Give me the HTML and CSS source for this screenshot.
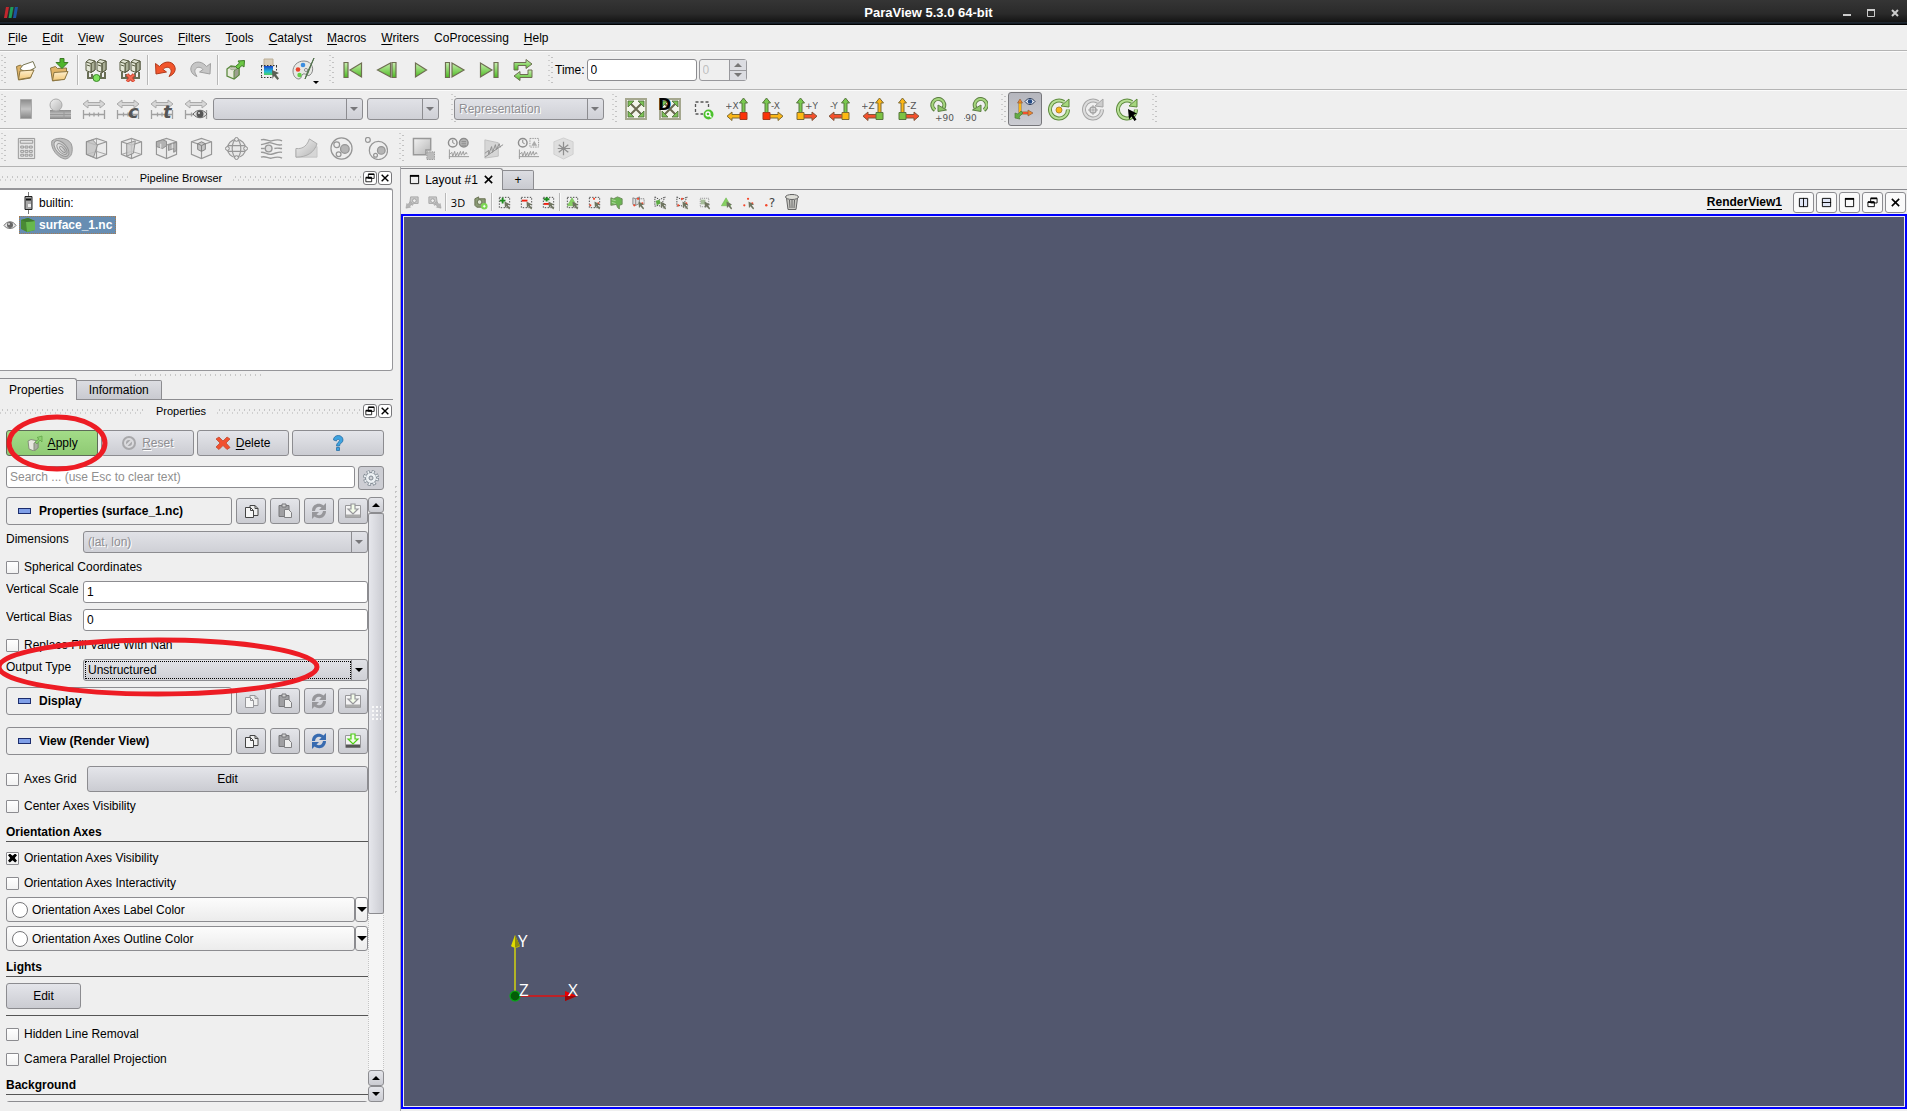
FILE: index.html
```html
<!DOCTYPE html>
<html lang="en">
<head>
<meta charset="utf-8">
<title>ParaView 5.3.0 64-bit</title>
<link rel="stylesheet" href="styles.css">
</head>
<body>
<svg class="sprite" width="0" height="0" aria-hidden="true">
<defs>
<linearGradient id="gGreen" x1="0" y1="0" x2="0" y2="1"><stop offset="0" stop-color="#c9f0b0"/><stop offset="1" stop-color="#4dbb22"/></linearGradient>
<linearGradient id="gGray" x1="0" y1="0" x2="0" y2="1"><stop offset="0" stop-color="#8b8b8b"/><stop offset=".5" stop-color="#c4c4c4"/><stop offset="1" stop-color="#868686"/></linearGradient>
<linearGradient id="gSoft" x1="0" y1="0" x2="1" y2="1"><stop offset="0" stop-color="#f2f2f2"/><stop offset="1" stop-color="#b5b5b5"/></linearGradient>
<linearGradient id="gFold" x1="0" y1="0" x2="0" y2="1"><stop offset="0" stop-color="#fff0cf"/><stop offset="1" stop-color="#f2c878"/></linearGradient>
<linearGradient id="gBlue" x1="0" y1="0" x2="0" y2="1"><stop offset="0" stop-color="#1744c8"/><stop offset=".6" stop-color="#22b8d8"/><stop offset="1" stop-color="#52d05a"/></linearGradient>

<symbol id="logo" viewBox="0 0 14 11"><path d="M2 0h3L3 11H0z" fill="#c1272d"/><path d="M6.500 0h3l-2 11h-3z" fill="#1e9e58"/><path d="M11 0h3l-2 11H9z" fill="#1b55a0"/></symbol>

<symbol id="folder" viewBox="0 0 24 24"><path d="M2.500 8.500l4-1.500 2 2 10-1v4l-2 8-12 2z" fill="#e0b468" stroke="#8a7440"/><path d="M6 11l3-4 10-3.500 2.500 6-9 5z" fill="#fff" stroke="#777755"/><path d="M4.500 21.500L6 13l14-1-3.500 7.500z" fill="url(#gFold)" stroke="#8a7440"/></symbol>
<symbol id="load" viewBox="0 0 24 24"><path d="M2.500 10l5-1.500 2 2 9-.5v4l-2 7-12 2z" fill="#e0b468" stroke="#8a7440"/><path d="M4.500 22.500L6 14.500l14-1-3.500 8z" fill="url(#gFold)" stroke="#8a7440"/><path d="M12 .5h4v4h4l-6 6-6-6h4z" fill="#4fb52b" stroke="#3c7a26"/></symbol>
<symbol id="server" viewBox="0 0 24 24"><g stroke="#55593f" stroke-width="1"><path d="M2 4l3-2.500 6 1.500v9l-4 2.500-5-2z" fill="#e3e6d6"/><path d="M7 5.500L11 3v9l-4 2.500z" fill="#a9ae96"/><path d="M2 4l5 1.500V14M3 7l3 1M13 4l3-2.500L22 3v9l-4 2.500-5-2z" fill="#e3e6d6"/><path d="M18 5.500L22 3v9l-4 2.500z" fill="#a9ae96"/><path d="M13 4l5 1.500V14M14 7l3 1" fill="none"/></g><path d="M4 14v6h17v-6M8 16v4M17 15v5" fill="none" stroke="#696e55" stroke-width="2"/></symbol>
<symbol id="connect" viewBox="0 0 24 24"><use href="#server"/><circle cx="12.500" cy="20" r="3.500" fill="#7ee05c" stroke="#3c8a2c"/></symbol>
<symbol id="disconnect" viewBox="0 0 24 24"><use href="#server"/><path d="M9 16.500l7 7M16 16.500l-7 7" stroke="#c23a28" stroke-width="3.500"/><path d="M9 16.500l7 7M16 16.500l-7 7" stroke="#f06a52" stroke-width="2"/></symbol>
<symbol id="undoShape" viewBox="0 0 24 24"><path d="M1.500 5.500l4 3C9 4 15 2.500 19 6c4 4 2.500 10-4 12.500 2.500-4 3-6.500.5-8.500-2-1.500-5-.5-6.500 1.500l3.500 2.500L2 16z" stroke-linejoin="round"/></symbol>
<symbol id="extract" viewBox="0 0 24 24"><path d="M3 11l4-3 8 1v8l-5 4-7-3z" fill="#e8ebdc" stroke="#5c8a3f" stroke-width="1.300"/><path d="M10 13l5-4v8l-5 4z" fill="#9da08e" stroke="#5c8a3f"/><ellipse cx="9" cy="10.500" rx="3" ry="1.300" fill="#c4c8b4" stroke="#85907a" stroke-width=".6"/><path d="M11.500 8.500l4-3.500-1.500-2 6.500-.5-.5 6.500-2-1.500-4 3.500z" fill="#6cc845" stroke="#3e7b28"/></symbol>
<symbol id="pickblue" viewBox="0 0 24 24"><path d="M6 1h9v8H6z" fill="#d8ccb8" stroke="#bcae96"/><path d="M6 8h9v9H6z" fill="url(#gBlue)"/><path d="M3 7.500h16M3 19.500h12M3.500 8v11M18.500 8v6" stroke="#333" stroke-dasharray="1.500 1.500" fill="none"/><path d="M14 12l7 3-3 1.500 3 4-1.500 1.500-3.500-4-1.500 3z" fill="#5b6155"/></symbol>
<symbol id="palette" viewBox="0 0 24 24"><path d="M12 3C5 3 1 8 1 13s3 8 6 8c3-.500 2-4 4-5 3-1 4 3 7 1 5-4 3-14-6-14z" fill="#e6e8e4" stroke="#888"/><circle cx="11" cy="7" r="2.300" fill="#3a8de0"/><circle cx="6" cy="11.500" r="2.300" fill="#e8442c"/><circle cx="7.500" cy="17" r="2.200" fill="#62d048"/><circle cx="14" cy="12" r="1.500" fill="#fff" stroke="#888"/><path d="M22 0l-6 15-3 6 2-6z" fill="#71906a" stroke="#51704c"/></symbol>

<symbol id="first" viewBox="0 0 24 24"><g fill="url(#gGreen)" stroke="#6e6e52" stroke-width="1.200"><path d="M3 4.500h4v15H3zM20.500 5v14L9 12z"/></g></symbol>
<symbol id="back" viewBox="0 0 24 24"><g fill="url(#gGreen)" stroke="#6e6e52" stroke-width="1.200"><path d="M17 4.500h4v15h-4zM15.500 5v14L2.500 12z"/></g></symbol>
<symbol id="play" viewBox="0 0 24 24"><path d="M6.500 5v14l11-7z" fill="url(#gGreen)" stroke="#6e6e52" stroke-width="1.200"/></symbol>
<symbol id="next" viewBox="0 0 24 24"><g fill="url(#gGreen)" stroke="#6e6e52" stroke-width="1.200"><path d="M2.500 4.500h4v15h-4zM9 5v14l12-7z"/></g></symbol>
<symbol id="last" viewBox="0 0 24 24"><g fill="url(#gGreen)" stroke="#6e6e52" stroke-width="1.200"><path d="M17 4.500h4v15h-4zM3.500 5v14L15 12z"/></g></symbol>
<symbol id="loop" viewBox="0 0 24 24"><g fill="url(#gGreen)" stroke="#6e6e52"><path d="M3 12V4.500h12V1.500L21 6l-6 4.500v-3H7V12z"/><path d="M21 12v7.500H9v3L3 18l6-4.500v3h8V12z"/></g></symbol>

<symbol id="cbar" viewBox="0 0 24 24"><path d="M6.500 2.500h11v19h-11z" fill="url(#gGray)" stroke="#aaa"/></symbol>
<symbol id="cedit" viewBox="0 0 24 24"><path d="M2 13h21v9H2z" fill="url(#gGray)"/><path d="M16 13v9M2 17.500h21" stroke="#999"/><circle cx="8" cy="8" r="6" fill="url(#gSoft)" stroke="#aaa"/></symbol>
<symbol id="range" viewBox="0 0 24 24"><path d="M1 7l5-4v2.500h12V3l5 4-5 4V8.500H6V11z" fill="#d6d6d6" stroke="#aaa"/><path d="M1.500 13v9M22.500 13v9M1.500 17.500h21M7.500 15.500v4M12 15.500v4M16.500 15.500v4" stroke="#a0a0a0" stroke-width="1.300" fill="none"/></symbol>
<symbol id="calc" viewBox="0 0 24 24"><g fill="none" stroke="#979797"><path d="M3.500 1.500h17v21h-17z" fill="#e4e4e4"/><path d="M5.500 3.500h13v3h-13z"/><path d="M6 9.500h3v2H6zM10.500 9.500h3v2h-3zM15 9.500h3v2h-3zM6 14h3v2H6zM10.500 14h3v2h-3zM15 14h3v2h-3zM6 18h3v2H6zM10.500 18h3v2h-3zM15 18h3v2h-3z"/></g></symbol>
<symbol id="contour" viewBox="0 0 24 24"><g stroke="#959595" fill="url(#gSoft)"><path d="M2 4C8-1 22 1 23 10c1 8-2 12-7 13C8 22 0 12 2 4z" fill="#bdbdbd"/><ellipse cx="12" cy="12" rx="5.500" ry="10" transform="rotate(-42 12 12)"/><ellipse cx="12.500" cy="12.500" rx="3.500" ry="7" transform="rotate(-42 12.500 12.500)"/><ellipse cx="13" cy="13" rx="1.500" ry="4" transform="rotate(-42 13 13)"/></g></symbol>
<symbol id="cube" viewBox="0 0 24 24"><g stroke="#979797" fill="none" stroke-width="1.200"><path d="M1.500 5l10.500-3.500L22.500 5v13L12 22.500 1.500 18z" fill="#ebebeb"/><path d="M1.500 5L12 8.500 22.500 5M12 8.500v14"/></g></symbol>
<symbol id="clip" viewBox="0 0 24 24"><use href="#cube"/><path d="M12 1.500V15l10 3M12 15L2 18" fill="none" stroke="#a5a5a5"/><path d="M1.500 5L8 3l5 5.500L9 21l-7.500-3z" fill="#c0c0c0" fill-opacity=".8" stroke="#909090"/></symbol>
<symbol id="slice" viewBox="0 0 24 24"><use href="#cube"/><path d="M12 1.500V15l10 3M12 15L2 18" fill="none" stroke="#a5a5a5"/><path d="M7 7l9-3-2 13-7 3z" fill="#cbcbcb" fill-opacity=".8" stroke="#909090"/></symbol>
<symbol id="thresh" viewBox="0 0 24 24"><use href="#cube"/><path d="M1.500 5L8 3l4 1.500V9l-4 3-6.500-2zM14 8.500l8.500-3V14l-3 2v-4L14 14z" fill="#b2b2b2" stroke="#8c8c8c"/><path d="M6 7v5M18 7v5" stroke="#eee"/></symbol>
<symbol id="subset" viewBox="0 0 24 24"><use href="#cube"/><path d="M8 7l4-2 4 2v6l-4 2-4-2z" fill="#c4c4c4" stroke="#808080"/><path d="M8 7l4 2 4-2M12 9v6" fill="none" stroke="#808080"/></symbol>
<symbol id="glyph" viewBox="0 0 24 24"><g fill="none" stroke="#969696" stroke-width="1.200"><circle cx="12" cy="12" r="9.500" fill="#e8e8e8"/><ellipse cx="12" cy="12" rx="4.500" ry="9.500"/><path d="M3 9h18M3 15h18"/></g><g fill="#e8e8e8" stroke="#8a8a8a"><circle cx="12" cy="2.500" r="2"/><circle cx="12" cy="21.500" r="2"/><circle cx="2.500" cy="12" r="2"/><circle cx="21.500" cy="12" r="2"/></g></symbol>
<symbol id="stream" viewBox="0 0 24 24"><g fill="none" stroke="#999" stroke-width="1.500"><path d="M1 3c5-2 7 2 11 1s7-2 11 0M1 8c4-1 5-1 8-2s9 4 14 2M15 12c3-1 5 0 8 0M1 16c4-1 6 3 11 2s7-3 11-2M1 21c5-2 7 2 11 1s7-2 11 0"/><circle cx="9" cy="12" r="3.500" fill="#ddd"/><path d="M1 12h4"/></g></symbol>
<symbol id="warp" viewBox="0 0 24 24"><path d="M1 13c10 2 17-1 22-3v11H1z" fill="#d6d6d6" stroke="#c4c4c4"/><path d="M1 12c8 1 12-4 14-10l8 5c-3 9-10 14-22 14z" fill="url(#gSoft)" stroke="#aaa"/></symbol>
<symbol id="group" viewBox="0 0 24 24"><g fill="#eee" stroke="#969696" stroke-width="1.300"><circle cx="12" cy="12" r="11"/><circle cx="7" cy="8" r="3"/><circle cx="9" cy="18" r="2.500"/><circle cx="15.500" cy="12.500" r="4.500" fill="#b5b5b5"/></g></symbol>
<symbol id="level" viewBox="0 0 24 24"><g fill="#eee" stroke="#969696" stroke-width="1.300"><circle cx="14" cy="14" r="9.500"/><circle cx="3" cy="3" r="2.500"/><circle cx="11" cy="19" r="2"/><circle cx="17" cy="14" r="4" fill="#b5b5b5"/></g></symbol>
<symbol id="selx" viewBox="0 0 24 24"><path d="M1.500 1.500h18v12h-5v5h-13z" fill="url(#gSoft)" stroke="#999" stroke-width="1.500"/><path d="M15.500 15.500h8v8h-8z" fill="#bbb" stroke="#999" stroke-dasharray="1.500 1"/></symbol>
<symbol id="wave" viewBox="0 0 24 24"><path d="M2.500 13v10M2 20.500h21M3 18l2-2 1 4 2-5 1 5 2-4 1 4 2-5 1 4 2-4 1 4 2-3 1 2" fill="none" stroke="#999"/></symbol>
<symbol id="plotsel" viewBox="0 0 24 24"><use href="#wave"/><circle cx="6" cy="6" r="4.500" fill="#eee" stroke="#8d8d8d" stroke-width="1.500"/><path d="M6 3v3l2 1" stroke="#888" fill="none"/><circle cx="17.500" cy="6" r="4.500" fill="#bbb" stroke="#8d8d8d" stroke-width="1.500"/><path d="M15 4.500h5M15 6.500h5M15 8.500h5" stroke="#888"/></symbol>
<symbol id="plotline" viewBox="0 0 24 24"><path d="M3 3l14 3v14L3 22z" fill="#d6d6d6" stroke="#c0c0c0"/><path d="M3 21L22 8M3 17l4-3 0 4 3-8 1 6 3-8 1 5 3-6 1 4" fill="none" stroke="#8f8f8f"/></symbol>
<symbol id="plottime" viewBox="0 0 24 24"><use href="#wave"/><circle cx="6" cy="6" r="4.500" fill="#eee" stroke="#8d8d8d" stroke-width="1.500"/><path d="M6 3v3l2 1" stroke="#888" fill="none"/><path d="M13.500 1.500h9v9h-9z" fill="none" stroke="#999" stroke-dasharray="1.500 1"/><path d="M18 4l3 5h-6z" fill="#aaa"/></symbol>
<symbol id="probe" viewBox="0 0 24 24"><path d="M2 5l10-4 10 4v13l-10 5-10-5z" fill="#dedede" stroke="#cfcfcf"/><path d="M12 5v14M6 12h13M7 8l10 8M17 8L7 16" stroke="#8f8f8f" stroke-width="1.300"/></symbol>

<symbol id="resetcam" viewBox="0 0 24 24"><path d="M2 2h20v20H2z" fill="#f3f4ea" stroke="#a5a78f" stroke-width="2"/><path d="M6 6l12 12M18 6L6 18" stroke="#6a6a50" stroke-width="2"/><path d="M4 4h6l-6 6zM20 4v6l-6-6zM4 20v-6l6 6zM20 20h-6l6-6z" fill="#7cc455" stroke="#4e6b38" stroke-width=".8"/></symbol>
<symbol id="resetd" viewBox="0 0 24 24"><use href="#resetcam"/><text x="0" y="13" class="icon-d">D</text></symbol>
<symbol id="zoombox" viewBox="0 0 24 24"><path d="M16.500 10V5h-13v12H11" fill="none" stroke="#555" stroke-width="1.300" stroke-dasharray="3 2"/><circle cx="16.500" cy="17.500" r="5" fill="#4cc22d"/><circle cx="16" cy="17" r="2" fill="none" stroke="#fff" stroke-width="1.300"/><path d="M17.500 18.500l2 2" stroke="#fff" stroke-width="1.300"/></symbol>
<symbol id="upG" viewBox="0 0 24 24"><path d="M16 16V6h-2.500L17.500 1l4 5H19v10z" fill="#79c94f" stroke="#57763d"/></symbol>
<symbol id="upY" viewBox="0 0 24 24"><path d="M16 16V6h-2.500L17.500 1l4 5H19v10z" fill="#fbb616" stroke="#7d6a35"/></symbol>
<symbol id="lfR" viewBox="0 0 24 24"><path d="M15 17.500H6V15l-5 4.200 5 4.300V21h9z" fill="#f4502c" stroke="#80563a"/></symbol>
<symbol id="lfY" viewBox="0 0 24 24"><path d="M15 17.500H6V15l-5 4.200 5 4.300V21h9z" fill="#fbb616" stroke="#7d6a35"/></symbol>
<symbol id="px" viewBox="0 0 24 24"><text x="-1" y="12" class="icon-ax">+X</text><use href="#upG"/><use href="#lfY"/><path d="M14 15.500h7v7h-7z" fill="#fb3208" stroke="#a33a20"/></symbol>
<symbol id="mx" viewBox="0 0 24 24"><text x="11" y="12" class="icon-ax">-X</text><g transform="matrix(-1 0 0 1 24 0)"><use href="#upG"/><use href="#lfY"/><path d="M14 15.500h7v7h-7z" fill="#fb3208" stroke="#a33a20"/></g></symbol>
<symbol id="py" viewBox="0 0 24 24"><text x="11" y="12" class="icon-ax">+Y</text><g transform="matrix(-1 0 0 1 24 0)"><use href="#upG"/><use href="#lfR"/><path d="M14 15.500h7v7h-7z" fill="#fdb913" stroke="#7d6a35"/></g></symbol>
<symbol id="my" viewBox="0 0 24 24"><text x="2" y="12" class="icon-ax">-Y</text><use href="#upG"/><use href="#lfR"/><path d="M14 15.500h7v7h-7z" fill="#fdb913" stroke="#7d6a35"/></symbol>
<symbol id="pz" viewBox="0 0 24 24"><text x="-1" y="12" class="icon-ax">+Z</text><use href="#upY"/><use href="#lfR"/><path d="M14 15.500h7v7h-7z" fill="#7cc243" stroke="#57763d"/></symbol>
<symbol id="mz" viewBox="0 0 24 24"><text x="11" y="12" class="icon-ax">-Z</text><g transform="matrix(-1 0 0 1 24 0)"><use href="#upY"/><use href="#lfR"/><path d="M14 15.500h7v7h-7z" fill="#7cc243" stroke="#57763d"/></g></symbol>
<symbol id="turn" viewBox="0 0 24 24"><path d="M5 13A6 6 0 1 1 13.500 11" fill="none" stroke="#5c7f42" stroke-width="4"/><path d="M5 13A6 6 0 1 1 13.500 11" fill="none" stroke="#a5d67d" stroke-width="2"/><path d="M8 8v6.500l8.500-1.500z" fill="#8cc565" stroke="#5c7f42"/></symbol>
<symbol id="p90" viewBox="0 0 24 24"><use href="#turn"/><text x="5" y="24" class="icon-ax">+90</text></symbol>
<symbol id="m90" viewBox="0 0 24 24"><g transform="matrix(-1 0 0 1 25 0)"><use href="#turn"/></g><text x="-2" y="24" class="icon-ax">-90</text></symbol>
<symbol id="axeseye" viewBox="0 0 24 24"><path d="M7 16V4M7 16h9" stroke="#9a7a35" stroke-width="3"/><path d="M7 16V6" stroke="#fbb616" stroke-width="2"/><path d="M7 16h9" stroke="#f4502c" stroke-width="2"/><path d="M4.500 6L7 2l2.500 4zM15 13l5 3-5 3z" fill="#f0862a" stroke="#80563a" stroke-width=".6"/><path d="M2 21v-5l3 1 3-3 2 2-4 4 1 2z" fill="#63ad44" stroke="#4e7a38" stroke-width=".7"/><path d="M12 4.500c3-4 7-4 10 0-3 4-7 4-10 0z" fill="#e8edf5" stroke="#283a58"/><circle cx="17" cy="4.500" r="2.300" fill="#234a85"/></symbol>
<symbol id="ring" viewBox="0 0 24 24"><path d="M17 5A9 9 0 1 0 21 12.500" fill="none" stroke="currentColor" stroke-width="4"/><path d="M17 5A9 9 0 1 0 21 12.500" fill="none" stroke="#b8e096" stroke-width="2"/><path d="M14 9l8-7v8z" fill="#a5d67d" stroke="currentColor"/></symbol>
<symbol id="rcenter" viewBox="0 0 24 24"><use href="#ring" color="#5d8a3d"/><circle cx="12" cy="13" r="3" fill="#fbb616" stroke="#b58a30"/></symbol>
<symbol id="rgray" viewBox="0 0 24 24"><path d="M17 5A9 9 0 1 0 21 12.500" fill="none" stroke="#a5a5a5" stroke-width="4"/><path d="M17 5A9 9 0 1 0 21 12.500" fill="none" stroke="#dcdcdc" stroke-width="2"/><path d="M14 9l8-7v8z" fill="#ccc" stroke="#a5a5a5"/><circle cx="12" cy="13" r="3" fill="none" stroke="#a5a5a5" stroke-width="1.500"/><path d="M12 8v10M7 13h10" stroke="#a5a5a5"/></symbol>
<symbol id="rpick" viewBox="0 0 24 24"><use href="#ring" color="#5d8a3d"/><path d="M13 12l9 4.500-3.500 1.500 3 4.500-2 1.500-3-4.500-2.500 3z" fill="#000"/></symbol>

<symbol id="cam" viewBox="0 0 16 16"><path d="M6 2h8v7H9l-1 2-3-2z" fill="#c9c9c9" stroke="#a8a8a8"/><circle cx="10" cy="6" r="2" fill="#eee" stroke="#a0a0a0"/><path d="M1 14l1-5 1 1 3-3 2 2-3 3 1 1z" fill="#b5b5b5" stroke="#a0a0a0" stroke-width=".6"/></symbol>
<symbol id="camgreen" viewBox="0 0 16 16"><path d="M2 4l4-2v2h7v9H4l-2-2z" fill="#8a9a75" stroke="#66704f"/><circle cx="7" cy="7.500" r="2.500" fill="#dfe6d6" stroke="#66704f"/><circle cx="12" cy="12" r="3.500" fill="#79d64e"/><path d="M10.500 12h3M12 10.500v3" stroke="#fff"/></symbol>
<symbol id="dash" viewBox="0 0 16 16"><path d="M2.500 2.500h11v11h-11z" fill="none" stroke="#444" stroke-dasharray="1.500 1.500"/></symbol>
<symbol id="arrow" viewBox="0 0 16 16"><path d="M8 7l6 3-2.500 1 2.500 3-1 1.500-3-3.500-1.500 2z" fill="#6f7560"/></symbol>
<symbol id="sadd" viewBox="0 0 16 16"><use href="#dash"/><path d="M6 3v6M3 6h6" stroke="#1e8a1e" stroke-width="2"/><use href="#arrow"/></symbol>
<symbol id="ssub" viewBox="0 0 16 16"><use href="#dash"/><path d="M3 6h6" stroke="#f02010" stroke-width="2"/><use href="#arrow"/></symbol>
<symbol id="stog" viewBox="0 0 16 16"><use href="#dash"/><path d="M6 2v5M3 4.500h6" stroke="#1e8a1e" stroke-width="2"/><path d="M3 9.500h6" stroke="#f02010" stroke-width="2"/><use href="#arrow"/></symbol>
<symbol id="tri" viewBox="0 0 16 16"><path d="M7.500 3l5 8.500h-10z" fill="#86d162" stroke="#5fae40" stroke-width=".5"/></symbol>
<symbol id="pts" viewBox="0 0 16 16"><g fill="#f4482c"><circle cx="7.500" cy="4" r="1.200"/><circle cx="3.500" cy="11" r="1.200"/><circle cx="12" cy="9" r="1.200"/></g></symbol>
<symbol id="scell" viewBox="0 0 16 16"><use href="#dash"/><use href="#tri"/><use href="#arrow"/></symbol>
<symbol id="spt" viewBox="0 0 16 16"><use href="#dash"/><use href="#pts"/><use href="#arrow"/></symbol>
<symbol id="fcell" viewBox="0 0 16 16"><path d="M2 3l3 1 4-2 5 2v6l-3 1v4l-2-2-1-3-6 1z" fill="#6bb553" stroke="#6d8a5c"/><path d="M3 5l4 1M3 8l4 1" stroke="#b8dca8"/></symbol>
<symbol id="fpt" viewBox="0 0 16 16"><path d="M2 3l3 1v7l-3-1zM5 4l4-2v7l-4 2" fill="#ddd" stroke="#888"/><path d="M9 4h5v7" fill="none" stroke="#666" stroke-dasharray="1 1"/><use href="#pts"/><use href="#arrow"/></symbol>
<symbol id="poly" viewBox="0 0 16 16"><path d="M2 2l5 3 6-3-3 6 4 3-3 3-5-3-4 1z" fill="none" stroke="#444" stroke-dasharray="1.500 1"/></symbol>
<symbol id="pcell" viewBox="0 0 16 16"><use href="#poly"/><path d="M3 6l4-1 1 4-4 2z" fill="#5cab43"/><use href="#arrow"/></symbol>
<symbol id="ppt" viewBox="0 0 16 16"><use href="#poly"/><use href="#pts"/><use href="#arrow"/></symbol>
<symbol id="block" viewBox="0 0 16 16"><path d="M3.500 3.500h9v9h-9z" fill="none" stroke="#888" stroke-dasharray="1 1"/><path d="M4 5h5v5H4z" fill="#a5bd98"/><use href="#arrow"/></symbol>
<symbol id="hcell" viewBox="0 0 16 16"><use href="#tri"/><use href="#arrow"/></symbol>
<symbol id="hpt" viewBox="0 0 16 16"><use href="#pts"/><use href="#arrow"/></symbol>
<symbol id="query" viewBox="0 0 16 16"><circle cx="3.500" cy="11" r="1.300" fill="#f4482c"/><text x="6" y="13" class="icon-q">?</text></symbol>
<symbol id="trash" viewBox="0 0 16 18"><path d="M2.500 5h11L12 16.500H4z" fill="#c9c9c4" stroke="#666"/><path d="M5.500 7l.5 8M8 7v8M10.500 7l-.5 8" stroke="#666"/><ellipse cx="8" cy="4" rx="6.500" ry="2.500" fill="#deded8" stroke="#666"/><path d="M6 1.500h4" stroke="#666"/></symbol>

<symbol id="float" viewBox="0 0 12 12"><path d="M4 1.500h7v5H4zM1 5.500h7v5H1z" fill="#fff" stroke="#000"/><path d="M4 1.500h7M1 5.500h7" stroke="#000" stroke-width="2"/></symbol>
<symbol id="close" viewBox="0 0 12 12"><path d="M2 2l8 8M10 2l-8 8" stroke="#000" stroke-width="1.700"/></symbol>
<symbol id="max" viewBox="0 0 12 12"><path d="M1.500 2h9v8.500h-9z" fill="none" stroke="#000"/><path d="M1 2h10" stroke="#000" stroke-width="2"/></symbol>
<symbol id="splith" viewBox="0 0 12 12"><path d="M1.500 1.500h9v9h-9z" fill="#dfe5f5" stroke="#000"/><path d="M6 1v10" stroke="#000"/></symbol>
<symbol id="splitv" viewBox="0 0 12 12"><path d="M1.500 1.500h9v9h-9z" fill="#dfe5f5" stroke="#000"/><path d="M1 6h10" stroke="#000"/></symbol>

<symbol id="copy" viewBox="0 0 16 16"><path d="M7 2.500h5l3 3v7H7z" fill="#eee" stroke="currentColor"/><path d="M2.500 4.500h5l3 3v7h-8z" fill="#f6f6f6" stroke="currentColor"/><path d="M7.500 4.500v3h3M12 2.500v3h3" fill="none" stroke="currentColor"/></symbol>
<symbol id="paste" viewBox="0 0 16 16"><path d="M2 2.500h10v11H2z" fill="#a0a0a3" stroke="#77777a"/><path d="M5 1h4v3H5z" fill="#d5d5d5" stroke="#77777a"/><path d="M7.500 6.500h4l3 3v5h-7z" fill="#eee" stroke="#808083"/></symbol>
<symbol id="reload" viewBox="0 0 16 16"><path d="M1 8C1 1 8-1 12.500 2.500L15 0v7H8l2.500-2.500C8 3 4.500 4 4 8z" fill="currentColor"/><path d="M15 8c0 7-7 9-11.500 5.500L1 16V9h7l-2.500 2.500c2.500 1.500 6 .5 6.500-3.500z" fill="currentColor"/></symbol>
<symbol id="save" viewBox="0 0 16 16"><path d="M.5 2.500h15v12H.5z" fill="#f4f4f4" stroke="#98989b"/><path d="M1 11.500h14v3H1z" fill="var(--base)"/><path d="M6 1h4v5h3l-5 5-5-5h3z" fill="#f2fbe8" stroke="currentColor" stroke-width="1.200"/></symbol>
<symbol id="gear" viewBox="0 0 16 16"><circle cx="8" cy="8" r="6.500" fill="none" stroke="#7f8992" stroke-width="3" stroke-dasharray="3 2.105"/><circle cx="8" cy="8" r="5.500" fill="#edf1f4" stroke="#7f8992"/><circle cx="8" cy="8" r="6.200" fill="none" stroke="#edf1f4" stroke-width="2.200" stroke-dasharray="1.600 3.270" stroke-dashoffset="-.6"/><circle cx="8" cy="8" r="2" fill="#d0d2d6" stroke="#7f8992"/></symbol>
<symbol id="apply" viewBox="0 0 16 16"><path d="M1 6l3-1.500L11 6v7l-4 3-5-2z" fill="#e8e8e0" stroke="#85907a"/><path d="M7 8l4-2v7l-4 3z" fill="#a9ada0" stroke="#85907a"/><path d="M8 7l4-3-2-1.500L15 1v6l-2-2-3 4z" fill="#8ed070" stroke="#5fa045" stroke-width=".7"/></symbol>
<symbol id="ban" viewBox="0 0 16 16"><circle cx="8" cy="8" r="7" fill="#a8a8ab"/><circle cx="8" cy="8" r="4" fill="none" stroke="#dadadd" stroke-width="2"/><path d="M5 11l6-6" stroke="#dadadd" stroke-width="2"/></symbol>
<symbol id="cross" viewBox="0 0 16 16"><path d="M4 2l4 4 4-4 3 2-4 4 4 4.500-3 2-4-4-4 4-3-2.500 4-4-4-4z" fill="#f1502f" stroke="#c04a30" stroke-width=".8"/></symbol>
<symbol id="help" viewBox="0 0 16 16"><path d="M3.500 5c0-6 9.500-6 9.500 0 0 3-3.500 3-3.500 6h-3c0-3.500 3-4 3-5.500s-3-1.500-3 .5z" fill="#3ea3e0" stroke="#2a6fa5" stroke-width=".8"/><path d="M6.500 12.500h3v3h-3z" fill="#3ea3e0" stroke="#2a6fa5" stroke-width=".8"/></symbol>
<symbol id="eye" viewBox="0 0 14 10"><path d="M1 5.500C4 .5 10 .5 13 5.500 10 9.500 4 9.500 1 5.500z" fill="#e6e6e6" stroke="#777"/><circle cx="7" cy="5" r="3" fill="#666"/><circle cx="6" cy="4" r="1" fill="#ddd"/></symbol>
</defs>
</svg>

<header class="titlebar">
  <svg class="app-logo" aria-hidden="true"><use href="#logo"/></svg>
  <h1>ParaView 5.3.0 64-bit</h1>
  <div class="window-buttons">
    <button aria-label="Minimize"><svg viewBox="0 0 8 8"><path d="M0 5h8v2H0z" fill="#ccc"/></svg></button>
    <button aria-label="Maximize"><svg viewBox="0 0 8 8"><path d="M.5 1h7v6.500h-7z" fill="none" stroke="#ccc"/><path d="M0 1h8" stroke="#ccc" stroke-width="2"/></svg></button>
    <button aria-label="Close window"><svg viewBox="0 0 8 8"><path d="M1 1l6 6M7 1L1 7" stroke="#ccc" stroke-width="2"/></svg></button>
  </div>
</header>

<nav class="menubar">
  <a href="#"><u>F</u>ile</a><a href="#"><u>E</u>dit</a><a href="#"><u>V</u>iew</a><a href="#"><u>S</u>ources</a><a href="#"><u>F</u>ilters</a><a href="#"><u>T</u>ools</a><a href="#"><u>C</u>atalyst</a><a href="#"><u>M</u>acros</a><a href="#"><u>W</u>riters</a><a href="#">CoProcessing</a><a href="#"><u>H</u>elp</a>
</nav>

<div class="toolbar">
  <i class="grip"></i>
  <button class="tool" aria-label="Open"><svg><use href="#folder"/></svg></button>
  <button class="tool" aria-label="Load state"><svg><use href="#load"/></svg></button>
  <i class="sep"></i>
  <button class="tool" aria-label="Connect"><svg><use href="#connect"/></svg></button>
  <button class="tool" aria-label="Disconnect"><svg><use href="#disconnect"/></svg></button>
  <i class="sep"></i>
  <button class="tool undo" aria-label="Undo"><svg><use href="#undoShape"/></svg></button>
  <button class="tool redo" aria-label="Redo"><svg><use href="#undoShape"/></svg></button>
  <i class="sep"></i>
  <button class="tool" aria-label="Extract"><svg><use href="#extract"/></svg></button>
  <button class="tool" aria-label="Pick"><svg><use href="#pickblue"/></svg></button>
  <button class="tool has-menu" aria-label="Palette"><svg><use href="#palette"/></svg></button>
  <i class="grip next"></i>
  <button class="tool" aria-label="First frame"><svg><use href="#first"/></svg></button>
  <button class="tool" aria-label="Previous frame"><svg><use href="#back"/></svg></button>
  <button class="tool" aria-label="Play"><svg><use href="#play"/></svg></button>
  <button class="tool" aria-label="Next frame"><svg><use href="#next"/></svg></button>
  <button class="tool" aria-label="Last frame"><svg><use href="#last"/></svg></button>
  <button class="tool" aria-label="Loop"><svg><use href="#loop"/></svg></button>
  <i class="grip next"></i>
  <label for="time">Time:</label>
  <input id="time" class="text time" type="text" value="0">
  <div class="spin"><input type="text" value="0" aria-label="Time index" disabled><span><button aria-label="Up" disabled><i class="up"></i></button><button aria-label="Down" disabled><i class="down"></i></button></span></div>
</div>

<div class="toolbar">
  <i class="grip"></i>
  <button class="tool" aria-label="Color legend"><svg><use href="#cbar"/></svg></button>
  <button class="tool" aria-label="Edit color map"><svg><use href="#cedit"/></svg></button>
  <button class="tool" aria-label="Rescale"><svg><use href="#range"/></svg></button>
  <button class="tool" aria-label="Rescale custom"><svg viewBox="0 0 24 24"><use href="#range"/><text x="12" y="21" class="icon-i">c</text></svg></button>
  <button class="tool" aria-label="Rescale over time"><svg viewBox="0 0 24 24"><use href="#range"/><text x="13" y="21" class="icon-i">t</text></svg></button>
  <button class="tool" aria-label="Rescale visible"><svg viewBox="0 0 24 24"><use href="#range"/><path d="M9 17c4-5 10-5 14 0-4 5-10 5-14 0z" fill="#ddd" stroke="#666"/><circle cx="16" cy="17" r="3.500" fill="#555"/><circle cx="15" cy="16" r="1" fill="#ddd"/></svg></button>
  <div class="combo w150"><select aria-label="Color by" disabled><option></option></select></div>
  <div class="combo w72"><select aria-label="Component" disabled><option></option></select></div>
  <i class="grip next"></i>
  <div class="combo w150 flush"><select aria-label="Representation" disabled><option>Representation</option></select></div>
  <i class="grip next"></i>
  <button class="tool" aria-label="Reset camera"><svg><use href="#resetcam"/></svg></button>
  <button class="tool" aria-label="Zoom to data"><svg><use href="#resetd"/></svg></button>
  <button class="tool" aria-label="Zoom to box"><svg><use href="#zoombox"/></svg></button>
  <button class="tool" aria-label="View +X"><svg><use href="#px"/></svg></button>
  <button class="tool" aria-label="View -X"><svg><use href="#mx"/></svg></button>
  <button class="tool" aria-label="View +Y"><svg><use href="#py"/></svg></button>
  <button class="tool" aria-label="View -Y"><svg><use href="#my"/></svg></button>
  <button class="tool" aria-label="View +Z"><svg><use href="#pz"/></svg></button>
  <button class="tool" aria-label="View -Z"><svg><use href="#mz"/></svg></button>
  <button class="tool" aria-label="Rotate +90"><svg><use href="#p90"/></svg></button>
  <button class="tool" aria-label="Rotate -90"><svg><use href="#m90"/></svg></button>
  <i class="grip next"></i>
  <button class="tool pressed" aria-label="Show orientation axes" aria-pressed="true"><svg><use href="#axeseye"/></svg></button>
  <button class="tool" aria-label="Show center"><svg><use href="#rcenter"/></svg></button>
  <button class="tool" aria-label="Reset center"><svg><use href="#rgray"/></svg></button>
  <button class="tool" aria-label="Pick center"><svg><use href="#rpick"/></svg></button>
  <i class="grip next"></i>
</div>

<div class="toolbar filters">
  <i class="grip"></i>
  <button class="tool" aria-label="Calculator"><svg><use href="#calc"/></svg></button>
  <button class="tool" aria-label="Contour"><svg><use href="#contour"/></svg></button>
  <button class="tool" aria-label="Clip"><svg><use href="#clip"/></svg></button>
  <button class="tool" aria-label="Slice"><svg><use href="#slice"/></svg></button>
  <button class="tool" aria-label="Threshold"><svg><use href="#thresh"/></svg></button>
  <button class="tool" aria-label="Extract subset"><svg><use href="#subset"/></svg></button>
  <button class="tool" aria-label="Glyph"><svg><use href="#glyph"/></svg></button>
  <button class="tool" aria-label="Stream tracer"><svg><use href="#stream"/></svg></button>
  <button class="tool" aria-label="Warp"><svg><use href="#warp"/></svg></button>
  <button class="tool" aria-label="Group datasets"><svg><use href="#group"/></svg></button>
  <button class="tool" aria-label="Extract level"><svg><use href="#level"/></svg></button>
  <i class="grip next"></i>
  <button class="tool" aria-label="Extract selection"><svg><use href="#selx"/></svg></button>
  <button class="tool" aria-label="Plot global variables over time"><svg><use href="#plotsel"/></svg></button>
  <button class="tool" aria-label="Plot over line"><svg><use href="#plotline"/></svg></button>
  <button class="tool" aria-label="Plot selection over time"><svg><use href="#plottime"/></svg></button>
  <button class="tool" aria-label="Probe"><svg><use href="#probe"/></svg></button>
</div>

<main class="workspace">
  <aside class="dock">
    <div class="dock-title"><i></i><h2>Pipeline Browser</h2><i></i><button aria-label="Float"><svg><use href="#float"/></svg></button><button aria-label="Close"><svg><use href="#close"/></svg></button></div>
    <ul class="tree">
      <li><span class="eye"></span><span class="node"><svg class="node-icon" viewBox="0 0 16 22"><path d="M8.500 0v22" stroke="#777"/><path d="M5 4.500h7v13H5z" fill="#a8a8a8" stroke="#222"/><path d="M6 6.500h5v2H6z" fill="#111"/><path d="M8 12h3v3H8z" fill="#eee"/></svg>builtin:</span></li>
      <li><svg class="eye" aria-label="Visible"><use href="#eye"/></svg><span class="node selected"><svg class="node-icon" viewBox="0 0 16 16"><path d="M1 3l7-2 7 3v9l-8 2-6-3z" fill="#4a8a35"/><path d="M6 5l9-1v9l-8 2z" fill="#67b84c"/><path d="M1 3l7-2 7 3-9 1z" fill="#3f7a30"/></svg>surface_1.nc</span></li>
    </ul>
    <div class="splitter"></div>
    <div class="tabs"><button class="tab active">Properties</button><button class="tab">Information</button></div>
    <div class="dock-title"><i></i><h2>Properties</h2><i></i><button aria-label="Float"><svg><use href="#float"/></svg></button><button aria-label="Close"><svg><use href="#close"/></svg></button></div>
    <div class="actions">
      <button class="btn apply"><svg><use href="#apply"/></svg><span><u>A</u>pply</span></button>
      <button class="btn" disabled><svg><use href="#ban"/></svg><span><u>R</u>eset</span></button>
      <button class="btn"><svg><use href="#cross"/></svg><span><u>D</u>elete</span></button>
      <button class="btn" aria-label="Help"><svg><use href="#help"/></svg></button>
    </div>
    <div class="search"><input class="text" type="text" aria-label="Search" placeholder="Search ... (use Esc to clear text)"><button class="btn square" aria-label="Advanced"><svg><use href="#gear"/></svg></button></div>
    <div class="scroll">
      <form class="form">
        <div class="section"><button type="button" class="fold"><i></i>Properties (surface_1.nc)</button><button type="button" class="btn mini" aria-label="Copy"><svg><use href="#copy"/></svg></button><button type="button" class="btn mini" aria-label="Paste"><svg><use href="#paste"/></svg></button><button type="button" class="btn mini off" aria-label="Restore defaults"><svg><use href="#reload"/></svg></button><button type="button" class="btn mini off" aria-label="Save defaults"><svg><use href="#save"/></svg></button></div>
        <div class="field"><label for="dims">Dimensions</label><div class="combo"><select id="dims" disabled><option>(lat, lon)</option></select></div></div>
        <label class="check"><input type="checkbox">Spherical Coordinates</label>
        <div class="field"><label for="vs">Vertical Scale</label><input id="vs" class="text" type="text" value="1"></div>
        <div class="field"><label for="vb">Vertical Bias</label><input id="vb" class="text" type="text" value="0"></div>
        <label class="check"><input type="checkbox">Replace Fill Value With Nan</label>
        <div class="field"><label for="ot">Output Type</label><div class="combo focus"><select id="ot"><option>Unstructured</option></select></div></div>
        <div class="section"><button type="button" class="fold"><i></i>Display</button><button type="button" class="btn mini off" aria-label="Copy"><svg><use href="#copy"/></svg></button><button type="button" class="btn mini" aria-label="Paste"><svg><use href="#paste"/></svg></button><button type="button" class="btn mini off" aria-label="Restore defaults"><svg><use href="#reload"/></svg></button><button type="button" class="btn mini off" aria-label="Save defaults"><svg><use href="#save"/></svg></button></div>
        <div class="section"><button type="button" class="fold"><i></i>View (Render View)</button><button type="button" class="btn mini" aria-label="Copy"><svg><use href="#copy"/></svg></button><button type="button" class="btn mini" aria-label="Paste"><svg><use href="#paste"/></svg></button><button type="button" class="btn mini blue" aria-label="Restore defaults"><svg><use href="#reload"/></svg></button><button type="button" class="btn mini green" aria-label="Save defaults"><svg><use href="#save"/></svg></button></div>
        <div class="field grid-row"><label class="check"><input type="checkbox">Axes Grid</label><button type="button" class="btn">Edit</button></div>
        <label class="check"><input type="checkbox">Center Axes Visibility</label>
        <h3>Orientation Axes</h3>
        <label class="check"><input type="checkbox" checked>Orientation Axes Visibility</label>
        <label class="check"><input type="checkbox">Orientation Axes Interactivity</label>
        <div class="color"><button type="button"><i></i>Orientation Axes Label Color</button><button type="button" aria-label="Label color menu"><b></b></button></div>
        <div class="color"><button type="button"><i></i>Orientation Axes Outline Color</button><button type="button" aria-label="Outline color menu"><b></b></button></div>
        <h3>Lights</h3>
        <button type="button" class="btn lights">Edit</button>
        <hr>
        <label class="check"><input type="checkbox">Hidden Line Removal</label>
        <label class="check"><input type="checkbox">Camera Parallel Projection</label>
        <h3>Background</h3>
        <div class="combo"><select aria-label="Background mode"><option></option></select></div>
      </form>
      <div class="scrollbar"><button class="btn" aria-label="Scroll up"><i class="up"></i></button><div class="track"><div class="thumb"></div></div><button class="btn" aria-label="Scroll up"><i class="up"></i></button><button class="btn" aria-label="Scroll down"><i class="down"></i></button></div>
    </div>
  </aside>
  <div class="vsplit"></div>
  <section class="views">
    <div class="tabs view-tabs"><button class="tab active"><svg><use href="#max"/></svg>Layout #1<svg><use href="#close"/></svg></button><button class="tab add">+</button></div>
    <div class="viewbar">
      <button aria-label="Undo camera"><svg><use href="#cam"/></svg></button>
      <button aria-label="Redo camera" class="flip"><svg><use href="#cam"/></svg></button>
      <i class="sep"></i>
      <button class="label3d">3D</button>
      <button aria-label="Adjust camera"><svg><use href="#camgreen"/></svg></button>
      <i class="sep"></i>
      <button aria-label="Add selection"><svg><use href="#sadd"/></svg></button>
      <button aria-label="Subtract selection"><svg><use href="#ssub"/></svg></button>
      <button aria-label="Toggle selection"><svg><use href="#stog"/></svg></button>
      <i class="sep"></i>
      <button aria-label="Select cells on"><svg><use href="#scell"/></svg></button>
      <button aria-label="Select points on"><svg><use href="#spt"/></svg></button>
      <button aria-label="Select cells through"><svg><use href="#fcell"/></svg></button>
      <button aria-label="Select points through"><svg><use href="#fpt"/></svg></button>
      <button aria-label="Select cells with polygon"><svg><use href="#pcell"/></svg></button>
      <button aria-label="Select points with polygon"><svg><use href="#ppt"/></svg></button>
      <button aria-label="Select block"><svg><use href="#block"/></svg></button>
      <button aria-label="Interactive cells"><svg><use href="#hcell"/></svg></button>
      <button aria-label="Interactive points"><svg><use href="#hpt"/></svg></button>
      <button aria-label="Hover points"><svg><use href="#query"/></svg></button>
      <button aria-label="Clear selection" class="clear"><svg><use href="#trash"/></svg></button>
      <a class="view-name" href="#">RenderView1</a>
      <div class="frame-buttons"><button aria-label="Split horizontal"><svg><use href="#splith"/></svg></button><button aria-label="Split vertical"><svg><use href="#splitv"/></svg></button><button aria-label="Maximize view"><svg><use href="#max"/></svg></button><button aria-label="Float view"><svg><use href="#float"/></svg></button><button aria-label="Close view"><svg><use href="#close"/></svg></button></div>
    </div>
    <div class="render">
      <svg class="triad" viewBox="0 0 90 85" role="img" aria-label="Orientation axes">
        <path d="M15 70V16" stroke="#e6e600" stroke-width="1.300"/><path d="M15 9l5 11c-2 2-7 2-9 0z" fill="#e0dc00"/><path d="M15 9l5 11-5 1.500z" fill="#8f8c10"/>
        <path d="M15 70h54" stroke="#e01010" stroke-width="1.300"/><path d="M77 70l-12-5v10z" fill="#e80000"/><path d="M77 70l-12 5v-5z" fill="#9a0808"/>
        <circle cx="15" cy="70" r="5" fill="#045c08" stroke="#08a818" stroke-width="1.200"/>
        <text x="18" y="21">Y</text><text x="19" y="70">Z</text><text x="68" y="70">X</text>
      </svg>
    </div>
  </section>
</main>

<svg class="marks" width="330" height="290" aria-hidden="true"><g fill="none" stroke="#ed1c24" stroke-width="5"><ellipse cx="57" cy="33" rx="48" ry="26"/><ellipse cx="158" cy="257" rx="159" ry="27"/></g></svg>
</body>
</html>
```
FILE: styles.css
```css
* { box-sizing: border-box; }
body {
  margin: 0;
  height: 100vh;
  display: flex;
  flex-direction: column;
  overflow: hidden;
  background: #efefef;
  color: #000;
  font: 12px/16px "Liberation Sans", Arial, sans-serif;
}
button, input, select { font: inherit; color: inherit; margin: 0; padding: 0; border: 0; background: none; }
button { display: flex; align-items: center; justify-content: center; }
h1, h2, h3, ul { margin: 0; padding: 0; list-style: none; }
svg { display: block; overflow: visible; flex: none; }
.sprite { position: absolute; }

/* title bar and menu */
.titlebar {
  flex: none;
  display: flex;
  align-items: center;
  height: 25px;
  padding: 0 8px 0 4px;
  background: linear-gradient(#353535, #2a2a2a 55%, #141414 88%, #2b3b4d 92%, #000 96%);
}
.app-logo { width: 14px; height: 11px; }
.titlebar h1 { flex: 1; padding-right: 4px; text-align: center; font-size: 13px; line-height: 24px; color: #fff; }
.window-buttons { display: flex; gap: 16px; }
.window-buttons svg { width: 8px; height: 8px; }
.menubar { flex: none; display: flex; gap: 15px; height: 26px; padding: 5px 8px; border-bottom: 1px solid #b4b4b4; }
.menubar a { color: #000; text-decoration: none; }
u { text-underline-offset: 2px; }

/* toolbars */
.toolbar { flex: none; display: flex; align-items: center; height: 39px; padding-bottom: 2px; border-top: 1px solid #fbfbfb; border-bottom: 1px solid #b4b4b4; }
.toolbar.filters { height: 38px; padding-bottom: 0; }
.tool { width: 34px; height: 34px; flex: none; }
.tool svg { width: 24px; height: 24px; }
.filters .tool { width: 35px; }
.filters .tool svg { width: 23px; height: 23px; }
.filters .grip.next { margin-left: 4px; }
.grip {
  flex: none;
  width: 9px;
  height: 30px;
  background:
    radial-gradient(circle, #c2c2c2 1px, transparent 1px) 2px 0 / 6px 5px repeat-y,
    radial-gradient(circle, #cdcdcd 1px, transparent 1px) -1px 3px / 6px 5px repeat-y;
}
.grip.next { width: 8px; margin-left: 7px; }
.sep { flex: none; width: 2px; height: 30px; background: #b8b8b8; border-right: 1px solid #fafafa; }
.undo { fill: #f2552c; stroke: #b03a1c; }
.redo { fill: #c6c6c6; stroke: #a0a0a0; }
.redo svg { transform: scaleX(-1); }
.has-menu { position: relative; }
.has-menu::after { content: ""; position: absolute; right: 2px; bottom: 3px; border: 3px solid transparent; border-top-color: #000; border-bottom: 0; }
.pressed { border: 1px solid #77777b; border-radius: 3px; background: linear-gradient(#b5b6bd, #cbccd2); }
.icon-d { font: bold 16px "DejaVu Sans", sans-serif; }
.icon-ax { font: 9px "DejaVu Sans", sans-serif; fill: #555; }
.icon-i { font: italic bold 18px "DejaVu Sans", sans-serif; fill: #555; }
.icon-q { font: 13px "DejaVu Sans", sans-serif; fill: #444; }

/* inputs */
.text { height: 22px; padding: 0 3px; border: 1px solid #8c8c90; border-radius: 3px; background: #fff; outline: 0; }
.text::placeholder { color: #8f8f8f; opacity: 1; }
.time { width: 110px; margin: 0 2px; }
.spin { display: flex; width: 48px; height: 22px; border: 1px solid #98989c; border-radius: 3px; }
.spin input { flex: 1; min-width: 0; padding-left: 3px; color: #c0c0c0; }
.spin span { width: 17px; border-left: 1px solid #98989c; background: #dcdde2; }
.spin button { width: 100%; height: 10px; }
.spin button + button { border-top: 1px solid #98989c; }
.up, .down { border: 4px solid transparent; border-top: 0; border-bottom-color: #000; }
.down { border-top: 4px solid #000; border-bottom: 0; }
.spin .up { border-bottom-color: #777; }
.spin .down { border-top-color: #777; }
.combo {
  position: relative;
  height: 22px;
  border: 1px solid #8c8c90;
  border-radius: 3px;
  background: linear-gradient(#e1e2e7, #cfd0d6);
}
.combo select { appearance: none; display: block; width: 100%; height: 20px; padding: 0 20px 0 4px; outline: 0; opacity: 1; }
.combo select:disabled { color: #8e8e92; text-shadow: 1px 1px #fff; }
.combo::before { content: ""; position: absolute; top: 0; bottom: 0; right: 15px; border-left: 1px solid #8c8c90; }
.combo::after { content: ""; position: absolute; top: 8px; right: 4px; border: 4px solid transparent; border-top-color: #000; border-bottom: 0; }
.combo:has(:disabled)::after { border-top-color: #77777a; }
.combo.focus select { width: calc(100% - 17px); height: 18px; margin: 1px; padding-left: 3px; outline: 1px dotted #000; outline-offset: -1px; }
.toolbar .combo { margin-right: 4px; }
.toolbar .combo.flush { margin: 0 0 0 -4px; }
.w150 { width: 150px; }
.w72 { width: 72px; }

.btn {
  height: 26px;
  gap: 5px;
  border: 1px solid #8c8c90;
  border-radius: 3px;
  background: linear-gradient(#e4e5ea, #cbccd2);
}
.btn:disabled { color: #8e8e92; text-shadow: 1px 1px #fff; }
.btn svg { width: 16px; height: 16px; }

/* left dock */
.workspace { flex: 1; min-height: 0; display: flex; }
.dock { flex: none; width: 393px; display: flex; flex-direction: column; padding-bottom: 9px; }
.dock-title { flex: none; display: flex; align-items: center; height: 21px; padding-right: 1px; gap: 1px; }
.dock-title i {
  flex: 1;
  height: 6px;
  background:
    radial-gradient(circle, #c6c6c6 1px, transparent 1px) 0 -1px / 5px 6px repeat-x,
    radial-gradient(circle, #d0d0d0 1px, transparent 1px) 3px 2px / 5px 6px repeat-x;
}
.dock-title h2 { padding: 0 10px; font-weight: normal; font-size: 11px; }
.dock-title button { width: 14px; height: 14px; border: 1px solid #77777a; border-radius: 3px; background: #fff; }
.dock-title svg { width: 10px; height: 10px; }
.tree {
  flex: none;
  height: 183px;
  padding-top: 2px;
  border: 1px solid #96969a;
  border-width: 2px 1px 1px 0;
  border-radius: 0 3px 3px 0;
  background: #fff;
}
.tree li { display: flex; align-items: center; height: 22px; padding-left: 3px; gap: 2px; }
.eye { width: 14px; height: 10px; }
.node { display: flex; align-items: center; gap: 3px; height: 18px; padding: 0 4px 0 1px; }
.node-icon { width: 16px; height: 22px; }
.selected { font-weight: bold; color: #fff; background: #678db2; outline: 1px dotted #a67c52; outline-offset: -1px; }
.selected .node-icon { height: 16px; }
.splitter { flex: none; width: 128px; height: 7px; margin: 0 auto; background: radial-gradient(circle, #c8c8c8 1px, transparent 1px) 0 2px / 5px 4px repeat-x; }
.tabs { flex: none; display: flex; align-items: flex-end; height: 22px; box-shadow: inset 0 -1px #8c8c90; }
.tab { height: 20px; padding: 0 12px; border: 1px solid #8c8c90; border-radius: 0 2px 0 0; background: linear-gradient(#dcdde2, #c9cad0); }
.tab.active { height: 22px; padding: 0 12px 0 9px; border-bottom: 0; border-left: 0; background: #efefef; border-radius: 0 3px 0 0; }
.tab + .tab { border-left: 0; }
.actions { flex: none; display: grid; grid-template-columns: repeat(4, 1fr); gap: 3px; padding: 9px 9px 10px 6px; }
.actions .apply { background: linear-gradient(#a3dc88, #8fca74); border-color: #5d6b58; }
.search { flex: none; display: flex; gap: 3px; padding: 0 9px 7px 6px; }
.search .text { flex: 1; height: 22px; }
.square { width: 26px; height: 24px; background: #cdced4; }
.scroll { flex: 1; min-height: 0; display: flex; padding: 0 9px 0 6px; overflow: hidden; }
.form { flex: 1; display: flex; flex-direction: column; gap: 6px; overflow: hidden; }
.form > * { flex: none; }
.section { display: flex; align-items: center; gap: 4px; }
.section + .section { margin-top: 6px; }
.fold { flex: 1; height: 28px; justify-content: flex-start; gap: 8px; padding-left: 11px; border: 1px solid #8c8c90; border-radius: 3px; font-weight: bold; }
.fold i { width: 13px; height: 6px; border: 1px solid #1c2d6e; background: #7f9fe8; }
.mini { width: 30px; color: #444; --base: #aaa; }
.off { color: #97979b; }
.blue { color: #386bb0; }
.green { color: #4ccf14; --base: #555; }
.field { display: flex; align-items: flex-start; }
.field > label { width: 77px; }
.field > .text, .field > .combo, .field > .btn { flex: 1; }
.check { display: flex; align-items: center; gap: 5px; height: 16px; }
.check + .check { margin-top: 3px; }
.check input { appearance: none; width: 13px; height: 13px; border: 1px solid #8c8c90; border-radius: 1px; background: linear-gradient(#fff, #f2f2f2); }
.check input:checked::before {
  content: "";
  display: block;
  height: 9px;
  margin: 1px;
  background: #000;
  clip-path: polygon(0 20%, 20% 0, 50% 25%, 80% 0, 100% 20%, 75% 50%, 100% 80%, 80% 100%, 50% 75%, 20% 100%, 0 80%, 25% 50%);
}
.grid-row { align-items: center; margin-top: 5px; }
.grid-row > .check { width: 81px; }
h3 { height: 18px; font-size: 12px; line-height: 16px; border-bottom: 1px solid #555; }
.check + h3 { margin-top: 4px; }
h3 + .check { margin-top: 2px; }
.color { display: flex; height: 25px; }
.color + .color { margin-top: -2px; }
.color + h3 { margin-top: 2px; }
.color button { border: 1px solid #8c8c90; border-radius: 3px; background: linear-gradient(#fcfcfc, #ececec); }
.color button:first-child { flex: 1; justify-content: flex-start; gap: 4px; padding-left: 5px; }
.color button + button { width: 13px; }
.color i { width: 16px; height: 16px; border: 1px solid #77777a; border-radius: 50%; background: #fff; }
.color b { border: 5px solid transparent; border-top-color: #000; border-bottom: 0; }
.lights { width: 75px; }
hr { width: 100%; height: 1px; margin: 0 0 4px; border: 0; background: #555; }
.scrollbar { flex: none; width: 16px; display: flex; flex-direction: column; }
.scrollbar .btn { width: 16px; height: 16px; }
.track { flex: 1; border: 1px dotted #c4c4c4; border-width: 0 1px; background: #f5f5f5; }
.thumb {
  height: 72%;
  margin: 0 -1px;
  border: 1px solid #8c8c90;
  border-radius: 2px;
  background: linear-gradient(90deg, #e6e7ec, #cbccd2);
  display: grid;
  place-items: center;
}
.thumb::after { content: ""; width: 10px; height: 17px; background: radial-gradient(circle, #f8f8f8 1px, transparent 1px) 0 0 / 4px 4px; }
.vsplit { flex: none; width: 7px; display: grid; align-items: center; }
.vsplit::after { content: ""; height: 310px; background: radial-gradient(circle, #c4c4c4 1px, transparent 1px) 0 0 / 5px 5px repeat-y; }

/* views */
.views { flex: 1; min-width: 0; display: flex; flex-direction: column; padding: 1px 0 2px; border-left: 1px solid #a8a8ac; }
.view-tabs .tab.active { width: 102px; gap: 5px; padding: 0 6px; }
.view-tabs svg { width: 11px; height: 11px; }
.view-tabs .add { width: 31px; }
.viewbar { flex: none; display: flex; align-items: center; height: 24px; }
.viewbar > button { width: 22px; height: 22px; }
.viewbar > button svg { width: 15px; height: 15px; }
.viewbar > .clear svg { width: 16px; height: 18px; }
.viewbar .sep { height: 18px; }
.flip svg { transform: scaleX(-1); }
.viewbar .label3d { font: 11px "Open Sans", sans-serif; }
.view-name { margin-left: auto; font-weight: bold; color: #000; text-underline-offset: 3px; }
.frame-buttons { display: flex; gap: 2px; margin: 0 1px 0 11px; }
.frame-buttons button { width: 21px; height: 21px; border: 1px solid #8c8c90; border-radius: 3px; background: #fafafa; }
.frame-buttons svg { width: 11px; height: 11px; }
.render { flex: 1; position: relative; border: 2px solid #00f; outline: 1px solid #e8e8f0; outline-offset: -3px; background: #52576e; }
.triad { position: absolute; left: 97px; bottom: 96px; width: 90px; height: 85px; }
.triad text { font: 17px "Open Sans", sans-serif; fill: #fff; }
.marks { position: absolute; left: 0; top: 410px; pointer-events: none; overflow: hidden; }
```
